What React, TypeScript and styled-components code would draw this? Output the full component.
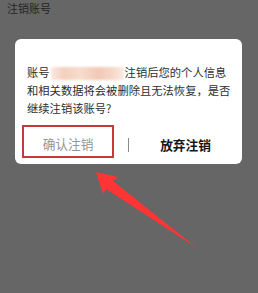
import React from "react";
import styled, { createGlobalStyle } from "styled-components";

const Global = createGlobalStyle`
  html, body { margin: 0; padding: 0; background: #666666; }
  body { font-family: "Noto Sans CJK SC", "Noto Sans", sans-serif; }
`;

const Page = styled.div`
  position: relative;
  width: 258px;
  height: 293px;
  background: #666666;
  overflow: hidden;
  box-sizing: border-box;
  padding-top: 1px;
`;

const Title = styled.div`
  margin-left: 7px;
  font-size: 11px;
  line-height: 14px;
  color: #242424;
`;

const Dialog = styled.div`
  margin: 24px 0 0 15px;
  width: 227px;
  height: 125px;
  box-sizing: border-box;
  background: #ffffff;
  border-radius: 6px;
  display: flex;
  flex-direction: column;
`;

const Message = styled.div`
  padding: 24px 11px 0 12px;
  font-size: 11.3px;
  line-height: 18px;
  color: #2e2e2e;
  white-space: nowrap;
`;

const Masked = styled.span`
  display: inline-block;
  vertical-align: middle;
  width: 73px;
  height: 13px;
  margin: 0 1px;
  background: linear-gradient(
    90deg,
    #fbe9e1 0%,
    #f4cfbd 18%,
    #f7dccd 40%,
    #f2c9b6 65%,
    #f6d8c9 85%,
    #fbece5 100%
  );
  filter: blur(1.2px);
`;

const Actions = styled.div`
  margin-top: 8px;
  display: flex;
  align-items: center;
  padding: 0 0 0 7px;
`;

const ConfirmButton = styled.div`
  width: 92px;
  height: 33px;
  box-sizing: border-box;
  border: 2px solid #c8373a;
  display: flex;
  align-items: center;
  justify-content: center;
  font-size: 12.7px;
  color: #959595;
  padding-top: 4px;
`;

const Divider = styled.div`
  width: 1px;
  height: 14px;
  margin-left: 14px;
  margin-top: 6px;
  background: #8a8a8a;
`;

const CancelButton = styled.div`
  flex: 1;
  text-align: center;
  font-size: 12.7px;
  font-weight: 700;
  color: #151515;
  padding-top: 6px;
`;

const ArrowSvg = styled.svg`
  position: absolute;
  left: 0;
  top: 0;
`;

export default function App() {
  return (
    <>
      <Global />
      <Page>
        <Title>注销账号</Title>
        <Dialog>
          <Message>
            账号<Masked />注销后您的个人信息
            <br />
            和相关数据将会被删除且无法恢复，是否
            <br />
            继续注销该账号?
          </Message>
          <Actions>
            <ConfirmButton>确认注销</ConfirmButton>
            <Divider />
            <CancelButton>放弃注销</CancelButton>
          </Actions>
        </Dialog>
        <ArrowSvg width="258" height="293" viewBox="0 0 258 293">
          <polygon points="96,172 118,177 113,181 197,248 106,189 103,194" fill="#ff3535" />
        </ArrowSvg>
      </Page>
    </>
  );
}
